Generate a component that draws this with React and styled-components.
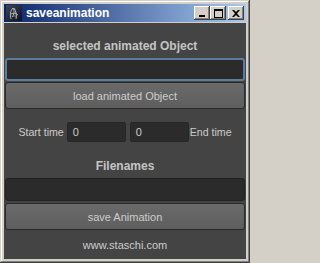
import React from "react";
import styled, { createGlobalStyle } from "styled-components";

const Global = createGlobalStyle`
  html, body { margin: 0; padding: 0; background: #d4d0c8; }
  body { font-family: "Liberation Sans", Arial, sans-serif; }
`;

const Window = styled.div`
  width: 250px;
  height: 263px;
  box-sizing: border-box;
  padding: 4px;
  background: #d4d0c8;
  box-shadow: inset -1px -1px #404040, inset 1px 1px #d4d0c8,
    inset -2px -2px #808080, inset 2px 2px #ffffff;
  display: flex;
  flex-direction: column;
`;

const TitleBar = styled.div`
  height: 18px;
  flex: none;
  display: flex;
  align-items: center;
  padding: 0 2px;
  margin-bottom: 1px;
  background: linear-gradient(to right, #0a246a, #a6caf0);
`;

const Title = styled.span`
  flex: 1;
  margin-left: 4px;
  color: #ffffff;
  font: bold 12px "Liberation Sans", Arial, sans-serif;
  white-space: nowrap;
`;

const CaptionButtons = styled.div`
  display: flex;
  align-items: center;
`;

const CapBtn = styled.div`
  width: 16px;
  height: 14px;
  box-sizing: border-box;
  margin-left: ${(p) => (p.$gap ? "2px" : "0")};
  background: #d4d0c8;
  box-shadow: inset -1px -1px #404040, inset 1px 1px #ffffff,
    inset -2px -2px #808080;
  display: flex;
  align-items: center;
  justify-content: center;
`;

const Content = styled.div`
  flex: 1;
  background: #444444;
  display: flex;
  flex-direction: column;
  padding: 0 1px;
`;

const Heading = styled.div`
  margin-top: ${(p) => p.$mt}px;
  height: 14px;
  line-height: 14px;
  text-align: center;
  color: #c4c4c4;
  font: bold 12px "Liberation Sans", Arial, sans-serif;
`;

const Field = styled.div`
  margin-top: ${(p) => p.$mt}px;
  height: 23px;
  box-sizing: border-box;
  background: #2b2b2b;
  border: ${(p) => (p.$focus ? "2px solid #5a7d9d" : "1px solid #222222")};
  border-radius: 3px;
`;

const Button = styled.div`
  margin-top: ${(p) => p.$mt}px;
  height: 27px;
  box-sizing: border-box;
  background: linear-gradient(#6a6a6a, #5e5e5e);
  border: 1px solid #2a2a2a;
  border-radius: 3px;
  display: flex;
  align-items: center;
  justify-content: center;
  color: #cccccc;
  font-size: 11px;
`;

const TimeRow = styled.div`
  margin-top: 13px;
  display: flex;
  align-items: center;
  justify-content: center;
  color: #cccccc;
  font-size: 10.6px;
`;

const TimeLabel = styled.span`
  margin: ${(p) => (p.$right ? "0 0 0 1px" : "0 3px 0 0")};
`;

const TimeInput = styled.div`
  width: 59px;
  height: 20px;
  box-sizing: border-box;
  margin-left: ${(p) => (p.$second ? "4px" : "0")};
  background: #2b2b2b;
  border: 1px solid #262626;
  border-radius: 2px;
  padding-left: 5px;
  display: flex;
  align-items: center;
  color: #cccccc;
  font-size: 11px;
`;

const Footer = styled.div`
  margin-top: 8px;
  height: 14px;
  line-height: 14px;
  text-align: center;
  color: #cccccc;
  font-size: 11px;
`;

const MayaIcon = () => (
  <svg width="16" height="16" viewBox="0 0 16 16">
    <defs>
      <linearGradient id="ig" x1="0" y1="0" x2="1" y2="1">
        <stop offset="0" stopColor="#3c4658" />
        <stop offset="1" stopColor="#0c1020" />
      </linearGradient>
    </defs>
    <rect x="0" y="0" width="16" height="16" fill="url(#ig)" />
    <path
      d="M5 14 C4 10 4 6 7 3 C9 6 8 10 6 12 M8 3 C10 6 11 10 10 14 M5 9 C7 8 10 8 12 10"
      fill="none"
      stroke="#b8b8b8"
      strokeWidth="1"
    />
    <path d="M7 12 C8 10 10 11 11 13" fill="none" stroke="#888" strokeWidth="1" />
  </svg>
);

export default function App() {
  return (
    <>
      <Global />
      <Window>
        <TitleBar>
          <MayaIcon />
          <Title>saveanimation</Title>
          <CaptionButtons>
            <CapBtn>
              <svg width="8" height="7" viewBox="0 0 8 7">
                <rect x="1" y="5" width="6" height="2" fill="#000" />
              </svg>
            </CapBtn>
            <CapBtn>
              <svg width="9" height="9" viewBox="0 0 9 9">
                <rect x="0.5" y="0.5" width="8" height="8" fill="none" stroke="#000" />
                <rect x="0" y="0" width="9" height="2" fill="#000" />
              </svg>
            </CapBtn>
            <CapBtn $gap>
              <svg width="8" height="7" viewBox="0 0 8 7">
                <path d="M0 0 L2 0 L4 2 L6 0 L8 0 L5 3.5 L8 7 L6 7 L4 5 L2 7 L0 7 L3 3.5 Z" fill="#000" />
              </svg>
            </CapBtn>
          </CaptionButtons>
        </TitleBar>
        <Content>
          <Heading $mt={16}>selected animated Object</Heading>
          <Field $mt={5} $focus />
          <Button $mt={1}>load animated Object</Button>
          <TimeRow>
            <TimeLabel>Start time</TimeLabel>
            <TimeInput>0</TimeInput>
            <TimeInput $second>0</TimeInput>
            <TimeLabel $right>End time</TimeLabel>
          </TimeRow>
          <Heading $mt={17}>Filenames</Heading>
          <Field $mt={5} />
          <Button $mt={2}>save Animation</Button>
          <Footer>www.staschi.com</Footer>
        </Content>
      </Window>
    </>
  );
}
